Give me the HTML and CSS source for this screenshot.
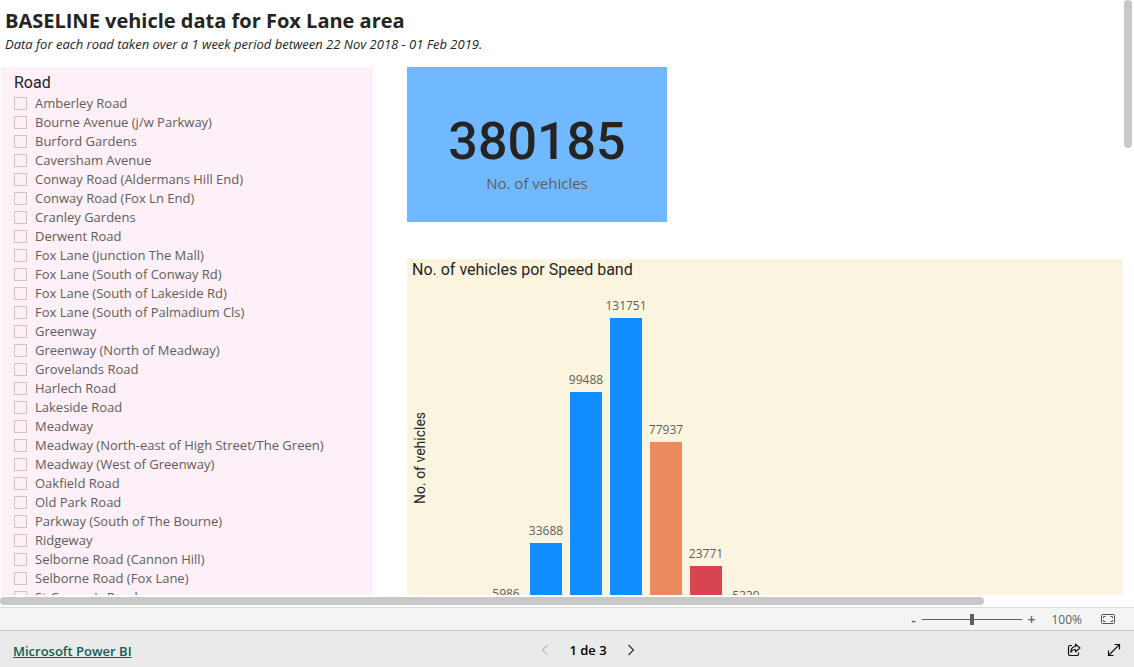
FILE: index.html
```html
<!DOCTYPE html>
<html lang="en">
<head>
<meta charset="utf-8">
<title>BASELINE vehicle data for Fox Lane area</title>
<link rel="stylesheet" href="styles.css">
</head>
<body>
<div class="app">
  <main class="viewport">
    <div class="report">
      <header class="heading">
        <h1 class="title">BASELINE vehicle data for Fox Lane area</h1>
        <p class="subtitle">Data for each road taken over a 1 week period between 22 Nov 2018 - 01 Feb 2019.</p>
      </header>
      <div class="visuals">
        <fieldset class="slicer">
          <legend class="slicer-title">Road</legend>
          <label class="option"><input class="box" type="checkbox">Amberley Road</label>
          <label class="option"><input class="box" type="checkbox">Bourne Avenue (j/w Parkway)</label>
          <label class="option"><input class="box" type="checkbox">Burford Gardens</label>
          <label class="option"><input class="box" type="checkbox">Caversham Avenue</label>
          <label class="option"><input class="box" type="checkbox">Conway Road (Aldermans Hill End)</label>
          <label class="option"><input class="box" type="checkbox">Conway Road (Fox Ln End)</label>
          <label class="option"><input class="box" type="checkbox">Cranley Gardens</label>
          <label class="option"><input class="box" type="checkbox">Derwent Road</label>
          <label class="option"><input class="box" type="checkbox">Fox Lane (junction The Mall)</label>
          <label class="option"><input class="box" type="checkbox">Fox Lane (South of Conway Rd)</label>
          <label class="option"><input class="box" type="checkbox">Fox Lane (South of Lakeside Rd)</label>
          <label class="option"><input class="box" type="checkbox">Fox Lane (South of Palmadium Cls)</label>
          <label class="option"><input class="box" type="checkbox">Greenway</label>
          <label class="option"><input class="box" type="checkbox">Greenway (North of Meadway)</label>
          <label class="option"><input class="box" type="checkbox">Grovelands Road</label>
          <label class="option"><input class="box" type="checkbox">Harlech Road</label>
          <label class="option"><input class="box" type="checkbox">Lakeside Road</label>
          <label class="option"><input class="box" type="checkbox">Meadway</label>
          <label class="option"><input class="box" type="checkbox">Meadway (North-east of High Street/The Green)</label>
          <label class="option"><input class="box" type="checkbox">Meadway (West of Greenway)</label>
          <label class="option"><input class="box" type="checkbox">Oakfield Road</label>
          <label class="option"><input class="box" type="checkbox">Old Park Road</label>
          <label class="option"><input class="box" type="checkbox">Parkway (South of The Bourne)</label>
          <label class="option"><input class="box" type="checkbox">Ridgeway</label>
          <label class="option"><input class="box" type="checkbox">Selborne Road (Cannon Hill)</label>
          <label class="option"><input class="box" type="checkbox">Selborne Road (Fox Lane)</label>
          <label class="option"><input class="box" type="checkbox">St George's Road</label>
        </fieldset>
        <div class="column">
          <section class="card">
            <div class="card-value">380185</div>
            <div class="card-label">No. of vehicles</div>
          </section>
          <section class="chart">
            <h2 class="chart-title">No. of vehicles por Speed band</h2>
            <div class="plot">
              <div class="axis">No. of vehicles</div>
              <div class="bars">
                <div class="bar-item"><span class="bar-value">5986</span><div class="bar" style="height:14px"></div></div>
                <div class="bar-item"><span class="bar-value">33688</span><div class="bar" style="height:77px"></div></div>
                <div class="bar-item"><span class="bar-value">99488</span><div class="bar" style="height:228px"></div></div>
                <div class="bar-item"><span class="bar-value">131751</span><div class="bar" style="height:302px"></div></div>
                <div class="bar-item"><span class="bar-value">77937</span><div class="bar orange" style="height:178px"></div></div>
                <div class="bar-item"><span class="bar-value">23771</span><div class="bar red" style="height:54px"></div></div>
                <div class="bar-item"><span class="bar-value">5339</span><div class="bar red" style="height:12px"></div></div>
              </div>
            </div>
          </section>
        </div>
      </div>
    </div>
    <div class="track-y"><div class="thumb-y"></div></div>
    <div class="track-x"><div class="thumb-x"></div></div>
  </main>
  <div class="zoombar">
    <button class="zoom-step" aria-label="Zoom out">-</button>
    <input class="zoom-range" type="range" min="0" max="100" value="50" aria-label="Zoom">
    <button class="zoom-step" aria-label="Zoom in">+</button>
    <span class="zoom-level">100%</span>
    <button class="fit" aria-label="Fit to page">
      <svg width="14" height="10" viewBox="0 0 14 10" fill="none" stroke="#555"><rect x=".5" y=".5" width="13" height="9" rx="1"/><path d="M2.5 4V2.5H4.5M9.5 2.5H11.5V4M11.5 6V7.5H9.5M4.5 7.5H2.5V6"/></svg>
    </button>
  </div>
  <footer class="footer">
    <div class="brand"><a class="brand-link" href="#">Microsoft Power BI</a></div>
    <nav class="pager">
      <button class="icon" aria-label="Previous page" disabled><svg width="8" height="12" viewBox="0 0 8 12" fill="none" stroke="#bdbdbd" stroke-width="1.2"><path d="M6.5 1 1.5 6l5 5"/></svg></button>
      <span class="page">1 de 3</span>
      <button class="icon" aria-label="Next page"><svg width="8" height="12" viewBox="0 0 8 12" fill="none" stroke="#333" stroke-width="1.2"><path d="m1.5 1 5 5-5 5"/></svg></button>
    </nav>
    <div class="actions">
      <button class="icon" aria-label="Share"><svg width="14" height="14" viewBox="0 0 14 14" fill="none" stroke="#111" stroke-width="1.2" stroke-linejoin="round"><path d="M5 2.500H3A1.500 1.500 0 0 0 1.500 4v7A1.500 1.500 0 0 0 3 12.500h7a1.500 1.500 0 0 0 1.500-1.500V9.500"/><path d="M8.500 1.200 13 5 8.500 8.800v-2.300C6.500 6.500 5 7 3.800 9.200c0-3.200 1.700-5.500 4.700-5.700z"/></svg></button>
      <button class="icon" aria-label="Full screen"><svg width="14" height="14" viewBox="0 0 14 14" fill="none" stroke="#111" stroke-width="1.2"><path d="M1.500 12.500l11-11M7.500 1.500h5v5M1.500 7.500v5h5"/></svg></button>
    </div>
  </footer>
</div>
</body>
</html>
```
FILE: styles.css
```css
* { box-sizing: border-box; }
body { margin: 0; font-family: "Open Sans", "Noto Sans", sans-serif; color: #252423; background: #fff; }
button { border: 0; padding: 0; background: none; font: inherit; color: inherit; display: flex; align-items: center; justify-content: center; }
svg { display: block; }

.app { height: 100vh; display: flex; flex-direction: column; }
.viewport { flex: 1; min-height: 0; display: grid; grid-template-columns: minmax(0, 1fr) 12px; grid-template-rows: minmax(0, 1fr) 12px; }
.report { overflow: hidden; display: flex; flex-direction: column; }
.heading { flex: none; height: 67px; padding: 7px 5px 0; }
.title { margin: 0; font-size: 20px; line-height: 28px; font-weight: 700; white-space: nowrap; }
.subtitle { margin: 0; font-size: 13px; line-height: 18px; font-style: italic; white-space: nowrap; }
.visuals { flex: none; display: grid; grid-template-columns: 372px minmax(0, 1fr); gap: 34px; padding-left: 1px; }

.slicer { margin: 0; border: 0; min-width: 0; padding: 5px 13px; background: #fdf0f8; display: flex; flex-direction: column; }
.slicer-title { float: left; padding: 0; margin-bottom: 1px; font-family: Roboto, sans-serif; font-size: 16px; line-height: 21px; font-weight: 400; }
.option { clear: both; display: flex; align-items: center; gap: 8px; height: 19px; font-size: 13px; line-height: 19px; color: #605e5c; white-space: nowrap; }
.box { appearance: none; flex: none; width: 13px; height: 13px; margin: 0; border: 1px solid #c8c6c4; }

.column { display: flex; flex-direction: column; gap: 37px; }
.card { width: 260px; height: 155px; background: #70b8ff; display: flex; flex-direction: column; align-items: center; padding-top: 45px; }
.card-value { font-family: Roboto, sans-serif; font-size: 52px; line-height: 60px; font-weight: 500; }
.card-label { font-size: 15px; line-height: 22px; color: #605e5c; }
.chart { background: #fbf5df; padding: 0 5px; }
.chart-title { margin: 0; font-family: Roboto, sans-serif; font-size: 16px; line-height: 21px; font-weight: 400; }
.plot { display: flex; height: 340px; }
.axis { writing-mode: vertical-rl; transform: rotate(180deg); width: 16px; font-family: Roboto, sans-serif; font-size: 14px; line-height: 16px; text-align: center; height: 355px; }
.bars { flex: 1; display: flex; gap: 8px; padding-left: 62px; align-items: flex-end; }
.bar-item { width: 32px; display: flex; flex-direction: column; align-items: center; }
.bar-value { font-size: 12px; line-height: 16px; margin-bottom: 4px; color: #605e5c; }
.bar { width: 32px; background: #118dff; }
.orange { background: #eb895f; }
.red { background: #d64550; }

.track-y { grid-column: 2; grid-row: 1; padding-left: 2px; }
.thumb-y { width: 8px; height: 148px; border-radius: 4px; background: #c8c8c8; }
.track-x { grid-column: 1 / 3; grid-row: 2; padding: 2px 12px 0 0; }
.thumb-x { width: 87.7%; height: 8px; border-radius: 4px; background: #c8c8c8; }

.zoombar { height: 24px; border-top: 1px solid #e1dfdd; border-bottom: 1px solid #c8c8c8; background: #f4f4f4; display: flex; align-items: center; justify-content: flex-end; padding-right: 19px; color: #605e5c; font-size: 12px; }
.zoom-step { width: 12px; height: 22px; font-size: 14px; font-weight: 600; }
.zoom-range { appearance: none; width: 100px; height: 12px; margin: 0 3px; background: linear-gradient(#605e5c, #605e5c) center / 100% 1px no-repeat; }
.zoom-range::-webkit-slider-thumb { appearance: none; width: 4px; height: 11px; background: #605e5c; }
.zoom-level { margin-left: 14px; }
.fit { margin-left: 19px; }

.footer { height: 36px; background: #eaeaea; display: grid; grid-template-columns: 1fr auto 1fr; align-items: center; padding: 2px 13px 0; color: #000; }
.brand-link { color: #0b6158; font-size: 13px; line-height: 20px; font-weight: 600; }
.pager { display: flex; align-items: center; gap: 20px; padding-left: 42px; }
.page { font-size: 13px; line-height: 20px; font-weight: 600; }
.actions { display: flex; justify-content: flex-end; gap: 26px; }
```
